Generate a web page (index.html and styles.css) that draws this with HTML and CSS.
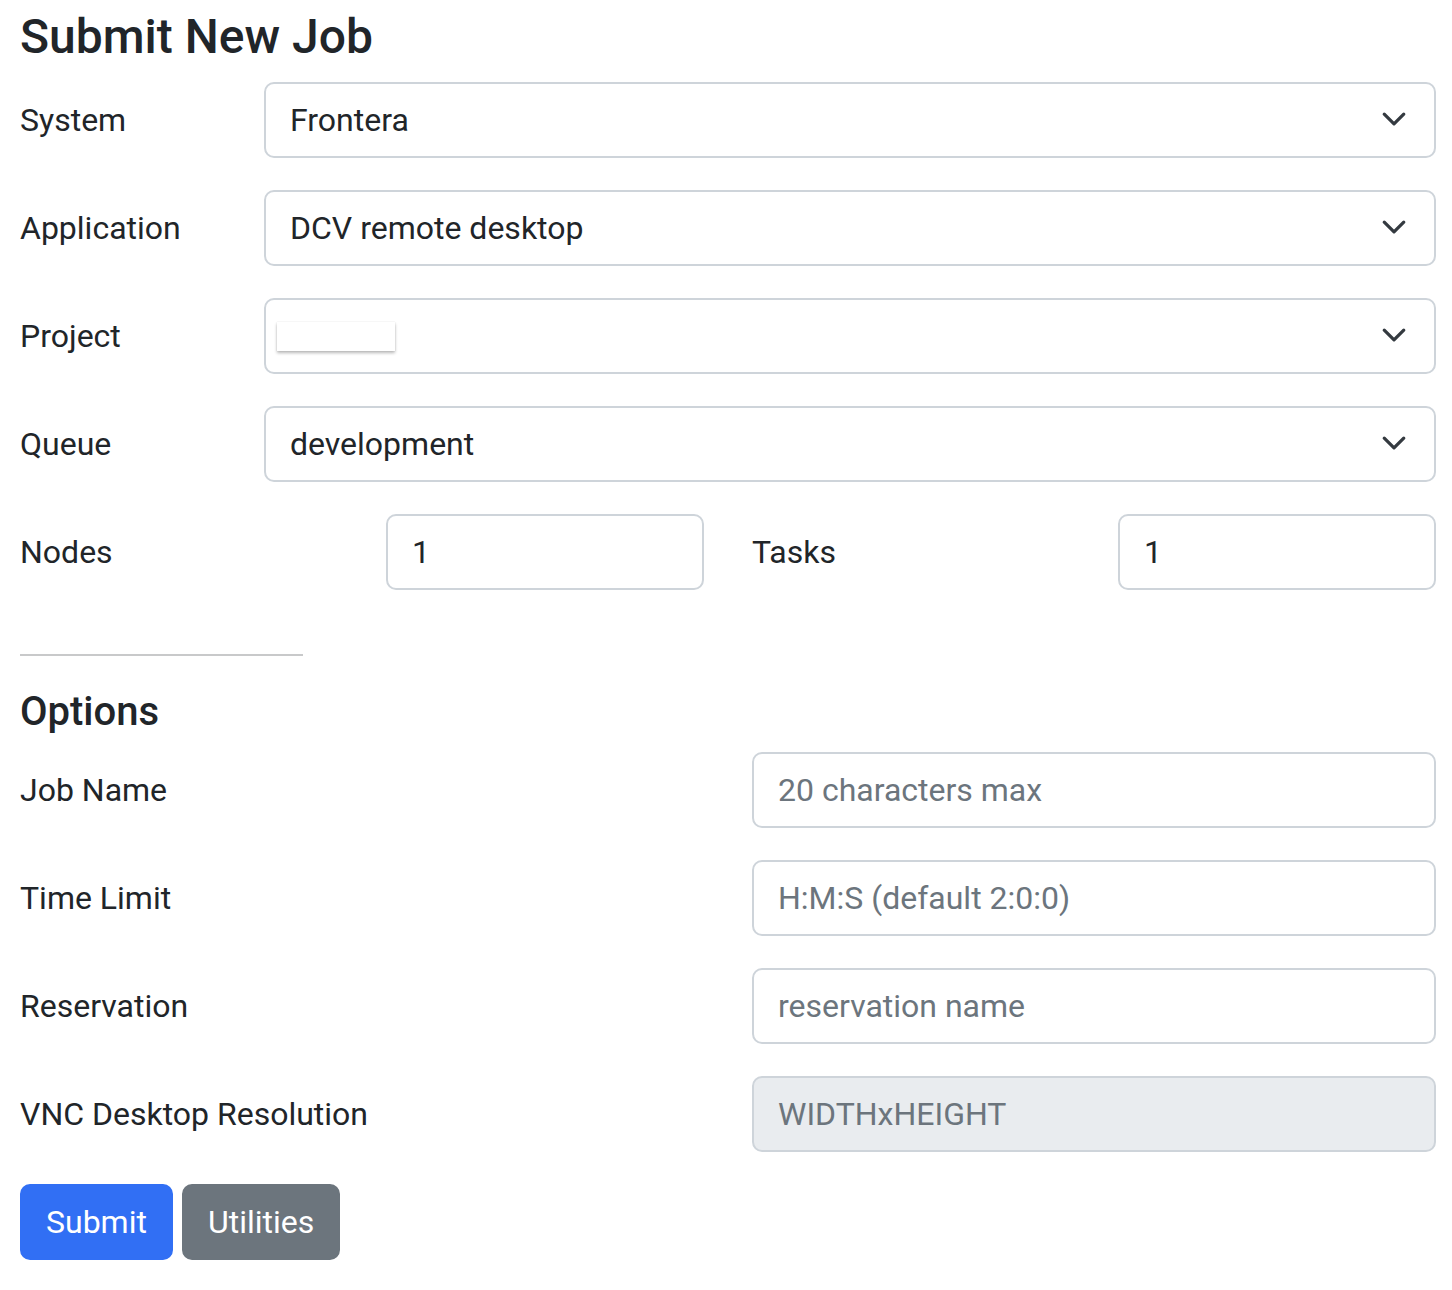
FILE: index.html
```html
<!DOCTYPE html>
<html lang="en">
<head>
<meta charset="utf-8">
<title>Submit New Job</title>
<link rel="stylesheet" href="styles.css">
</head>
<body>
<main class="page">
  <h3 class="title">Submit New Job</h3>
  <form class="job-form">
    <div class="row row-main">
      <label class="col-label" for="system">System</label>
      <div class="select-wrap">
        <select id="system" class="form-select"><option>Frontera</option></select>
        <svg class="chevron" viewBox="0 0 16 16" width="26" height="26"><path d="M2 5l6 6 6-6" fill="none" stroke="#343a40" stroke-width="2" stroke-linecap="round" stroke-linejoin="round"/></svg>
      </div>
    </div>
    <div class="row row-main">
      <label class="col-label" for="app">Application</label>
      <div class="select-wrap">
        <select id="app" class="form-select"><option>DCV remote desktop</option></select>
        <svg class="chevron" viewBox="0 0 16 16" width="26" height="26"><path d="M2 5l6 6 6-6" fill="none" stroke="#343a40" stroke-width="2" stroke-linecap="round" stroke-linejoin="round"/></svg>
      </div>
    </div>
    <div class="row row-main">
      <label class="col-label" for="project">Project</label>
      <div class="select-wrap">
        <div id="project" class="form-select fake-select"><span class="empty-chip"></span></div>
        <svg class="chevron" viewBox="0 0 16 16" width="26" height="26"><path d="M2 5l6 6 6-6" fill="none" stroke="#343a40" stroke-width="2" stroke-linecap="round" stroke-linejoin="round"/></svg>
      </div>
    </div>
    <div class="row row-main">
      <label class="col-label" for="queue">Queue</label>
      <div class="select-wrap">
        <select id="queue" class="form-select"><option>development</option></select>
        <svg class="chevron" viewBox="0 0 16 16" width="26" height="26"><path d="M2 5l6 6 6-6" fill="none" stroke="#343a40" stroke-width="2" stroke-linecap="round" stroke-linejoin="round"/></svg>
      </div>
    </div>
    <div class="row row-quad">
      <label class="col-label" for="nodes">Nodes</label>
      <input id="nodes" class="form-control" type="text" value="1">
      <label class="col-label" for="tasks">Tasks</label>
      <input id="tasks" class="form-control" type="text" value="1">
    </div>

    <hr class="divider">
    <h5 class="section-title">Options</h5>

    <div class="row row-half">
      <label class="col-label" for="jobname">Job Name</label>
      <input id="jobname" class="form-control" type="text" placeholder="20 characters max">
    </div>
    <div class="row row-half">
      <label class="col-label" for="timelimit">Time Limit</label>
      <input id="timelimit" class="form-control" type="text" placeholder="H:M:S (default 2:0:0)">
    </div>
    <div class="row row-half">
      <label class="col-label" for="reservation">Reservation</label>
      <input id="reservation" class="form-control" type="text" placeholder="reservation name">
    </div>
    <div class="row row-half">
      <label class="col-label" for="vnc">VNC Desktop Resolution</label>
      <input id="vnc" class="form-control" type="text" placeholder="WIDTHxHEIGHT" disabled>
    </div>

    <div class="actions">
      <button type="button" class="btn btn-primary">Submit</button>
      <button type="button" class="btn btn-secondary">Utilities</button>
    </div>
  </form>
</main>
</body>
</html>
```

FILE: styles.css
```css
* { box-sizing: border-box; }

html, body {
  margin: 0;
  padding: 0;
  background: #fff;
}

body {
  font-family: Roboto, "Liberation Sans", Arial, sans-serif;
  font-size: 32px;
  line-height: 1.5;
  color: #212529;
}

.page {
  width: 1416px;
  margin-left: 20px;
}

.title {
  margin: 0 0 16px;
  padding-top: 8px;
  font-size: 48px;
  font-weight: 500;
  line-height: 1.2;
}

.row {
  display: grid;
  column-gap: 48px;
  margin-bottom: 32px;
  align-items: start;
}

.row-main { grid-template-columns: 196px 1fr; }
.row-quad { grid-template-columns: repeat(4, 1fr); }
.row-half { grid-template-columns: 1fr 1fr; }

.col-label {
  padding: 14px 0;
  font-size: 32px;
  line-height: 1.5;
}

.select-wrap {
  position: relative;
}

.form-select,
.form-control {
  display: block;
  width: 100%;
  height: 76px;
  margin: 0;
  font-family: inherit;
  font-size: 32px;
  line-height: 1.5;
  color: #212529;
  background: #fff;
  border: 2px solid #ced4da;
  border-radius: 10px;
  outline: none;
}

.form-select {
  -webkit-appearance: none;
  appearance: none;
  padding: 10px 72px 10px 24px;
}

.fake-select {
  position: relative;
}

.empty-chip {
  position: absolute;
  left: 11px;
  top: 22px;
  width: 118px;
  height: 29px;
  background: #fff;
  box-shadow: 0 2px 3px rgba(0, 0, 0, 0.28), 0 0 1px rgba(0, 0, 0, 0.12);
}

.chevron {
  position: absolute;
  right: 29px;
  top: 24px;
  pointer-events: none;
}

.form-control {
  padding: 10px 24px;
}

.form-control::placeholder {
  color: #6c757d;
  opacity: 1;
}

.form-control:disabled {
  background: #e9ecef;
}

.divider {
  width: 283px;
  margin: 64px 0 32px;
  border: 0;
  border-top: 2px solid #c8c9ca;
}

.section-title {
  margin: 0 0 16px;
  font-size: 40px;
  font-weight: 500;
  line-height: 1.2;
}

.actions {
  display: flex;
  gap: 9px;
}

.btn {
  height: 76px;
  padding: 12px 24px;
  font-family: inherit;
  font-size: 32px;
  line-height: 48px;
  color: #fff;
  border: 2px solid transparent;
  border-radius: 10px;
  cursor: pointer;
}

.btn-primary {
  background: #316ff4;
  border-color: #316ff4;
}

.btn-secondary {
  background: #6c757d;
  border-color: #6c757d;
}
```
